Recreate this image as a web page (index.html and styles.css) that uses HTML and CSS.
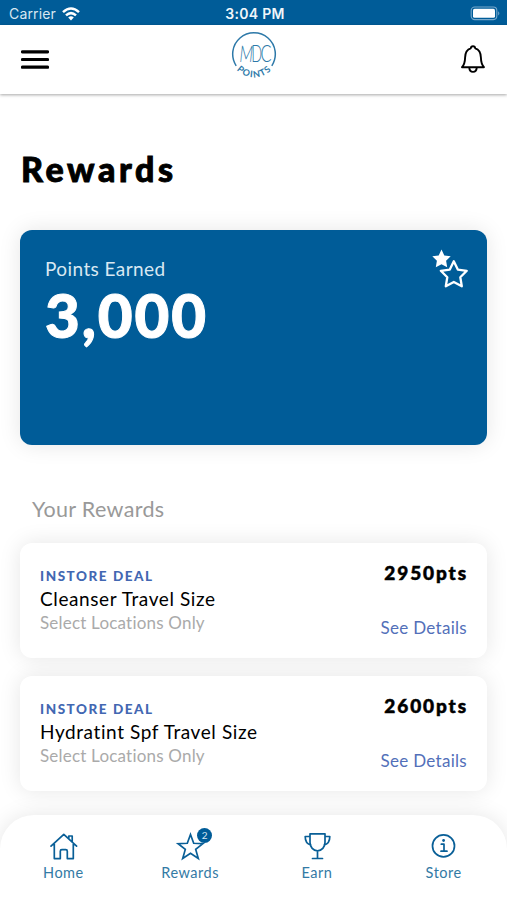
FILE: index.html
```html
<!DOCTYPE html>
<html lang="en">
<head>
<meta charset="utf-8">
<title>Rewards</title>
<link rel="stylesheet" href="styles.css">
</head>
<body>
<div class="app">
  <div class="status">
    <div class="carrier"><span>Carrier</span>
      <svg width="18" height="14" viewBox="0 0 18 14" fill="none" stroke="#fff" stroke-width="2.5"><path d="M1 5.2Q9-2.2 17 5.2M4 8.4Q9 3.8 14 8.4"/><path d="M6.2 10.4Q9 8 11.8 10.4L9 13.4Z" fill="#fff" stroke="none"/></svg>
    </div>
    <span class="time">3:04 PM</span>
    <svg class="battery" width="31" height="15" viewBox="0 0 31 15"><rect x="1.2" y="1" width="25.6" height="12.6" rx="3.5" fill="none" stroke="#78a9cc" stroke-width="1.1"/><rect x="3" y="2.8" width="22" height="9" rx="1.6" fill="#fff"/><path d="M28.2 5.2q2.3 2.1 0 4.2z" fill="#78a9cc"/></svg>
  </div>
  <header class="header">
    <svg class="menu" width="28" height="20" viewBox="0 0 28 20" stroke="#000" stroke-width="3.2" stroke-linecap="round"><path d="M1.5 1.8h25M1.5 9.500h25M1.5 17.200h25"/></svg>
    <svg class="logo" width="50" height="50" viewBox="0 0 50 50">
      <defs><path id="arc" d="M1.600 24A23.400 23.400 0 0 0 48.400 24"/></defs>
      <path d="M7.200 35.800A21.3 21.3 0 1 1 42.800 35.800" fill="none" stroke="#2c78a8" stroke-width="1.5"/>
      <g class="monogram"><text transform="translate(9.8 31.800) skewX(-6) scale(.65 1)">M</text><text transform="translate(22.300 31.800) scale(.62 1)">D</text><text transform="translate(31.500 31.800) scale(.71 1)">C</text></g>
      <text class="logo-word"><textPath href="#arc" startOffset="50.500%" text-anchor="middle">POINTS</textPath></text>
    </svg>
    <svg class="bell" width="26" height="30" viewBox="0 0 26 30" fill="none" stroke="#000" stroke-width="1.9" stroke-linejoin="round"><path d="M2 22.2C4.6 19.6 5 17.7 5.1 12.6C5.2 7.2 7.5 4.2 10.8 3.3C11 .6 15 .6 15.2 3.3C18.5 4.2 20.8 7.2 20.9 12.6C21 17.7 21.4 19.6 24 22.2Z"/><path d="M9.3 22.800c.2 5.400 7.2 5.400 7.4 0"/></svg>
  </header>
  <main class="content">
    <h1>Rewards</h1>
    <section class="points">
      <div><div class="points-label">Points Earned</div><div class="points-value">3,000</div></div>
      <svg width="38" height="42" viewBox="0 0 38 42"><path d="M10.5 .5l2.8 5.9 6.4.9-4.6 4.5 1.1 6.4-5.7-3-5.7 3 1.1-6.4L1.3 7.300l6.400-.9z" fill="#fff"/><path d="M22.800 12.200l4 8.400 9 1.200-6.500 6.400 1.500 9.100-8-4.300-8 4.300 1.500-9.100-6.500-6.400 9-1.200z" fill="#005c98" stroke="#fff" stroke-width="2.300" stroke-linejoin="round"/></svg>
    </section>
    <h2>Your Rewards</h2>
    <div class="deals">
      <article class="deal">
        <div><div class="tag">INSTORE DEAL</div><div class="name">Cleanser Travel Size</div><div class="place">Select Locations Only</div></div>
        <div class="side"><div class="cost">2950pts</div><a class="details">See Details</a></div>
      </article>
      <article class="deal">
        <div><div class="tag">INSTORE DEAL</div><div class="name">Hydratint Spf Travel Size</div><div class="place">Select Locations Only</div></div>
        <div class="side"><div class="cost">2600pts</div><a class="details">See Details</a></div>
      </article>
    </div>
  </main>
  <nav class="tabs">
    <a class="tab"><svg width="30" height="30" viewBox="0 0 30 30"><path d="M3 15.200L15.800 3.300 28.600 15.200M6.300 13v14.600h6v-7.400q0-1.600 1.600-1.600h3.800q1.600 0 1.600 1.600v7.400h6V13M20.800 7.500V5h3.400v5.800"/></svg><span>Home</span></a>
    <a class="tab"><span class="icon"><svg width="30" height="30" viewBox="0 0 30 30"><path d="M15.500 3.500l3.200 8.800 9.200.4-7.200 5.700 2.600 9.100-7.800-5.300-7.800 5.300 2.600-9.100-7.200-5.700 9.200-.4z" stroke-linejoin="miter"/></svg><b class="badge">2</b></span><span>Rewards</span></a>
    <a class="tab"><svg width="30" height="30" viewBox="0 0 30 30"><path d="M8 2.800h15v8.500c0 5-3.300 8.500-7.500 8.500S8 16.300 8 11.300zM8 5.500H3.200c0 4.800 1.700 7.500 5.500 8.400M23 5.500h4.800c0 4.800-1.700 7.500-5.500 8.400M15.500 19.800v7.700M10.500 27.500h10"/></svg><span>Earn</span></a>
    <a class="tab"><svg width="30" height="30" viewBox="0 0 30 30"><circle cx="14.500" cy="14.900" r="11"/><path d="M12.300 13.200h2.700v6.600M12 20.200h6"/><circle cx="14.600" cy="9.500" r="1.400" class="dot"/></svg><span>Store</span></a>
  </nav>
</div>
</body>
</html>
```

FILE: styles.css
```css
* { box-sizing: border-box; }
body { margin: 0; background: #fff; font-family: Lato, "Liberation Sans", sans-serif; color: #000; }
.app { height: 900px; display: flex; flex-direction: column; overflow: hidden; }
svg { display: block; flex: none; }
.status { height: 25px; flex: none; background: #005c98; color: #fff; display: grid; grid-template-columns: 1fr auto 1fr; align-items: center; padding: 2px 6px 0 9px; font-family: Inter, "Liberation Sans", sans-serif; font-size: 14px; }
.carrier { display: flex; align-items: center; gap: 6px; color: #d8e7f1; letter-spacing: .15px; }
.time { font-weight: 600; letter-spacing: .3px; color: #f0f6fa; }
.battery { justify-self: end; }
.header { height: 69px; flex: none; display: grid; grid-template-columns: 1fr 50px 1fr; align-items: center; padding: 0 21px 0 21px; background: #fff; box-shadow: 0 1px 3px rgba(0, 0, 0, .35); }
.menu { margin-top: 1px; }
.bell { justify-self: end; }
.logo { margin-top: -10px; }
.monogram { font-size: 23px; font-weight: 300; fill: #2c78a8; }
.logo-word { font-size: 9px; font-weight: 700; letter-spacing: 1.100px; fill: #2c78a8; }
.content { flex: 1; min-height: 0; padding: 55px 20px 0; }
h1 { margin: 0 0 41px 1px; font-size: 34px; line-height: 40px; font-weight: 900; letter-spacing: 3.600px; -webkit-text-stroke: .9px #000; }
.points { height: 215px; border-radius: 12px; background: #005c98; color: #fff; padding: 26px 18px 0 25px; display: flex; justify-content: space-between; box-shadow: 0 0 22px rgba(0, 0, 0, .1); }
.points svg { margin-top: -7px; }
.points-label { font-size: 19px; line-height: 26px; letter-spacing: .42px; color: #d9e8f2; }
.points-value { font-size: 60px; line-height: 66px; font-weight: 900; letter-spacing: 1.900px; -webkit-text-stroke: 1px #fff; }
h2 { margin: 50px 0 20px 12px; font-size: 21.500px; line-height: 28px; font-weight: 400; letter-spacing: .35px; color: #999; }
.deals { display: flex; flex-direction: column; gap: 18px; }
.deal { height: 115px; border-radius: 12px; background: #fff; padding: 22px 20px 0; display: flex; justify-content: space-between; box-shadow: 0 0 22px rgba(0, 0, 0, .1); }
.tag { font-size: 13.500px; line-height: 22px; font-weight: 900; letter-spacing: 1.550px; color: #4267b2; }
.name { font-size: 19px; line-height: 24px; letter-spacing: .6px; }
.place { font-size: 17px; line-height: 24px; letter-spacing: .2px; color: #aaa; }
.side { display: flex; flex-direction: column; align-items: flex-end; }
.cost { font-size: 19px; line-height: 24px; margin: -4px -1px 0 0; font-weight: 900; letter-spacing: 1.900px; -webkit-text-stroke: .5px #000; }
.details { font-size: 17px; line-height: 24px; margin-top: 31px; letter-spacing: .3px; color: #526fb9; }
.tabs { position: relative; height: 85px; flex: none; padding: 16px 0 0; border-radius: 34px 34px 0 0; background: #fff; display: grid; grid-template-columns: repeat(4, 1fr); box-shadow: 0 0 22px rgba(0, 0, 0, .1); }
.tab { display: flex; flex-direction: column; align-items: center; font-size: 14.500px; line-height: 20px; letter-spacing: .5px; color: #337aa5; }
.tab > span:last-child { margin-top: 2px; }
.tab svg { fill: none; stroke: #095f97; stroke-width: 1.700; stroke-linejoin: round; stroke-linecap: round; }
.tab .dot { fill: #095f97; stroke: none; }
.icon { position: relative; }
.badge { position: absolute; left: 22px; top: -3px; width: 15px; height: 15px; border-radius: 50%; background: #005c98; color: #d8e7f1; font-size: 10px; line-height: 15px; font-weight: 400; text-align: center; letter-spacing: 0; }
```
